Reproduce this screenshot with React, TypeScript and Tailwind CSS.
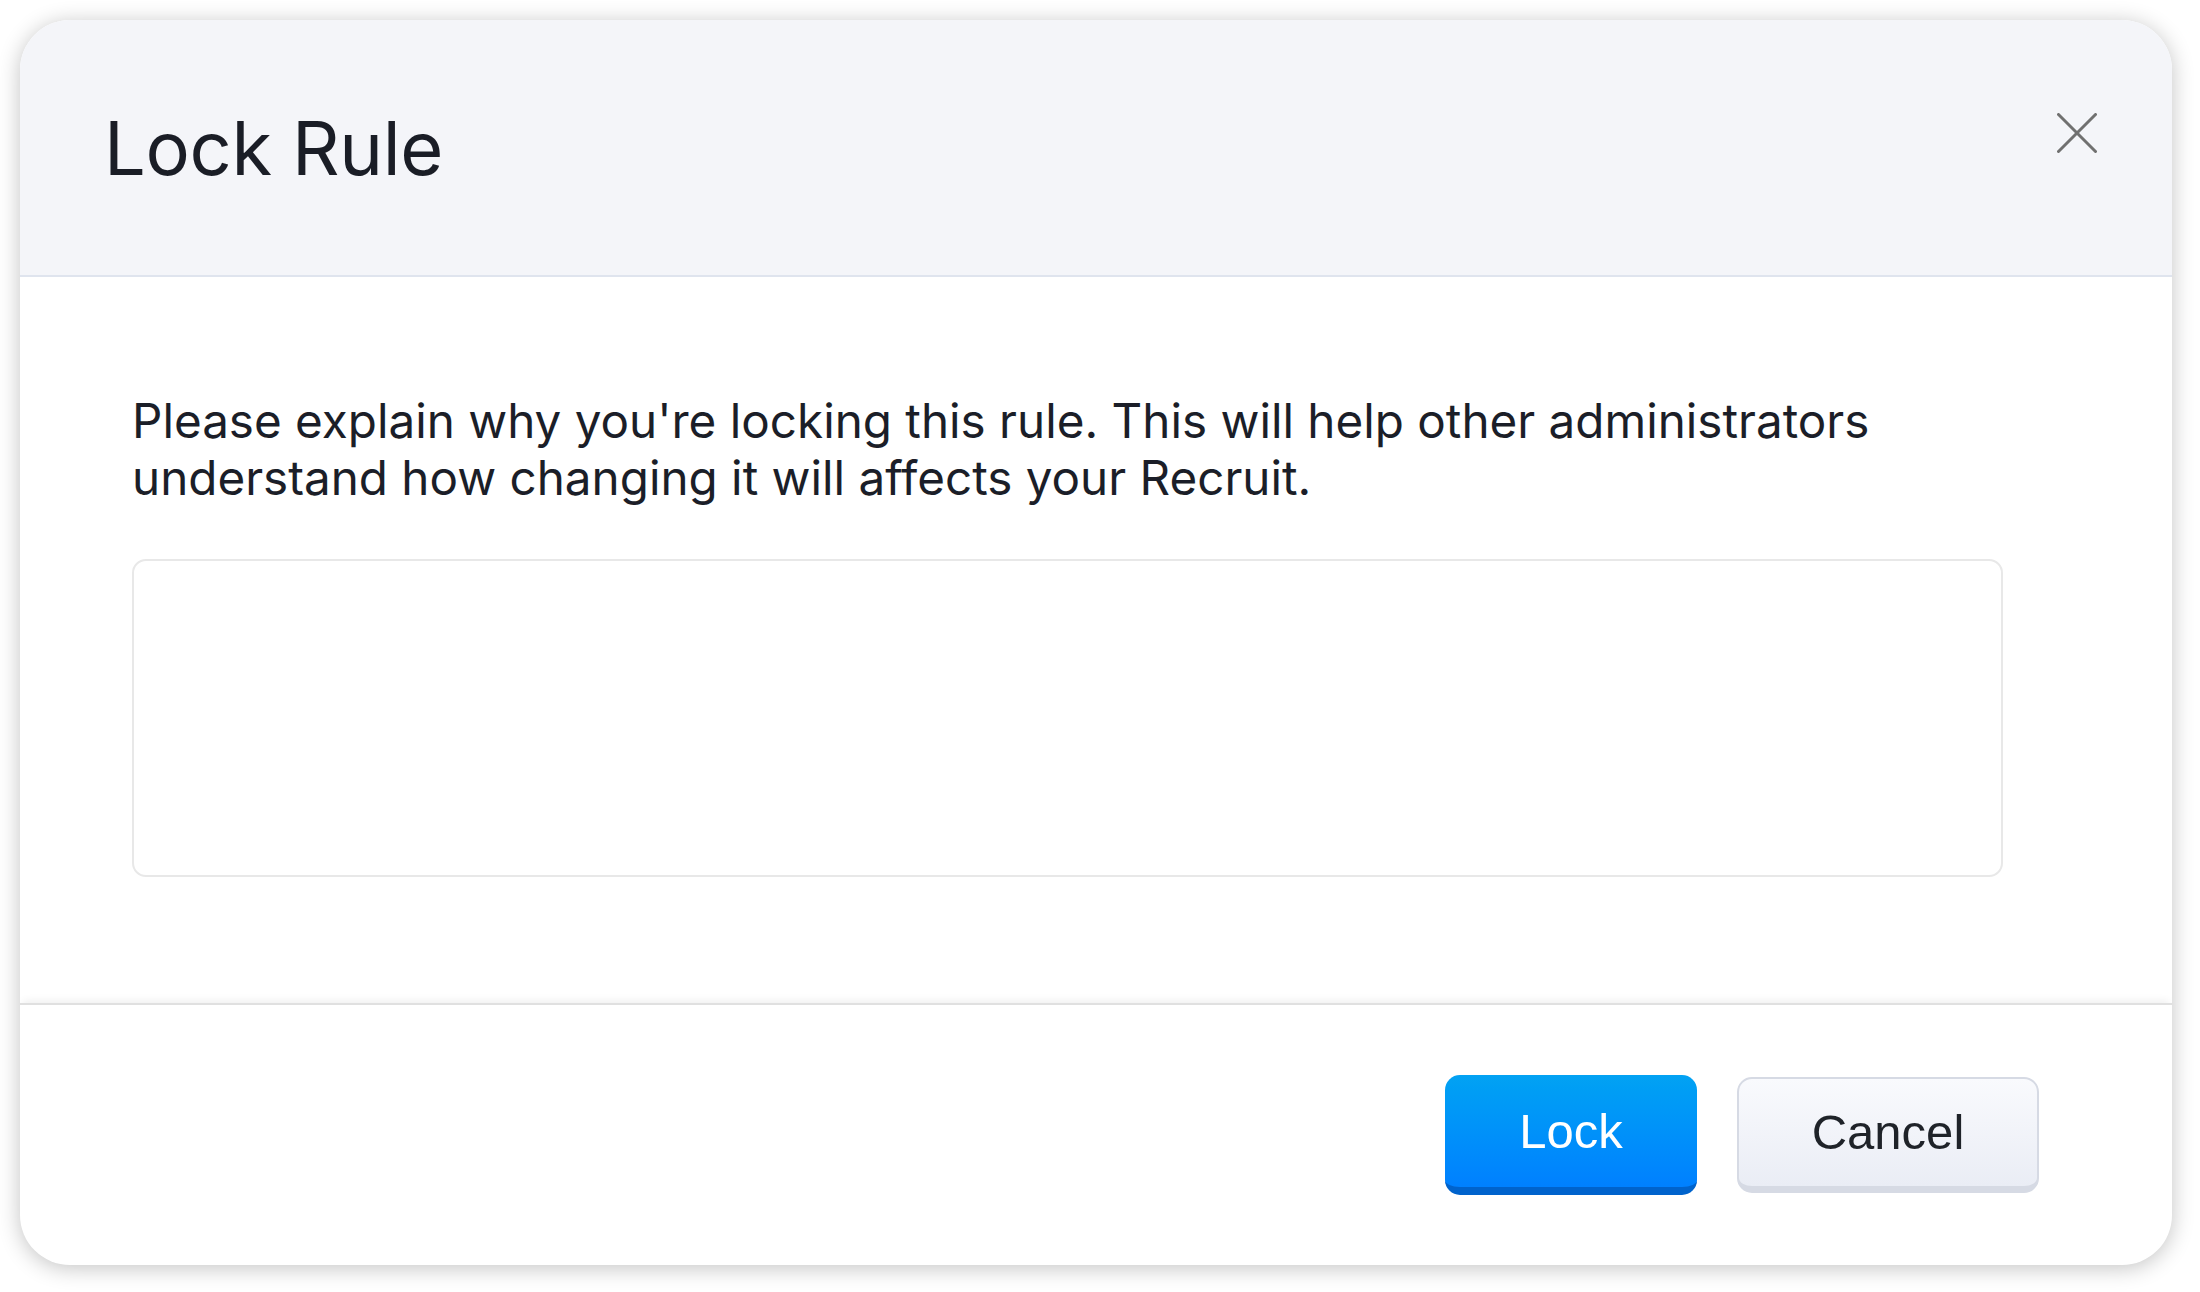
import React from "react";

export default function App() {
  return (
    <div className="w-[2200px] h-[1292px] bg-white pt-[20px] pl-[20px]" style={{ fontFamily: "Inter, 'Liberation Sans', sans-serif" }}>
      <div className="w-[2152px] h-[1245px] rounded-[50px] bg-white overflow-hidden shadow-[0_3px_22px_rgba(0,0,0,0.24)] flex flex-col">
        {/* Header */}
        <div className="h-[257px] shrink-0 bg-[#f4f5f9] border-b-2 border-[#dfe4ee] flex items-start justify-between pl-[84px] pr-[75px]">
          <h1 className="mt-[82px] text-[74px] leading-[92px] font-normal text-[#1a1d26] tracking-[-0.005em]">Lock Rule</h1>
          <button className="mt-[93px] w-[40px] h-[40px] text-[#707070]" aria-label="Close">
            <svg width="40" height="40" viewBox="0 0 40 40" fill="none" stroke="currentColor" strokeWidth="3" strokeLinecap="round">
              <line x1="1.5" y1="1.5" x2="38.5" y2="38.5" />
              <line x1="38.5" y1="1.5" x2="1.5" y2="38.5" />
            </svg>
          </button>
        </div>

        {/* Body */}
        <div className="flex-1 pt-[115px] pl-[112px] pr-[169px] pb-[125px] flex flex-col">
          <p className="text-[47.6px] leading-[57px] text-[#1b1e28] max-w-[1860px]">
            Please explain why you're locking this rule. This will help other administrators understand how changing it will affects your Recruit.
          </p>
          <textarea className="mt-[53px] h-[318px] w-full rounded-[14px] border-2 border-[#e8e8e8] resize-none outline-none" />
        </div>

        {/* Footer */}
        <div className="h-[262px] shrink-0 border-t-2 border-[#e0e0e0] shadow-[0_-5px_8px_-3px_rgba(0,0,0,0.07)] flex items-center justify-end gap-[40px] pr-[133px]" style={{ fontFamily: "'Liberation Sans', Arial, sans-serif" }}>
          <button className="w-[252px] h-[120px] rounded-[15px] bg-gradient-to-b from-[#03a2f3] to-[#0080ff] border-b-[8px] border-[#0063cc] text-white text-[49px] leading-none">
            Lock
          </button>
          <button className="w-[302px] h-[116px] rounded-[15px] bg-gradient-to-b from-[#f9fafd] to-[#eaedf5] border-2 border-b-[7px] border-[#d6dae4] text-[#1f2329] text-[49px] leading-none">
            Cancel
          </button>
        </div>
      </div>
    </div>
  );
}
